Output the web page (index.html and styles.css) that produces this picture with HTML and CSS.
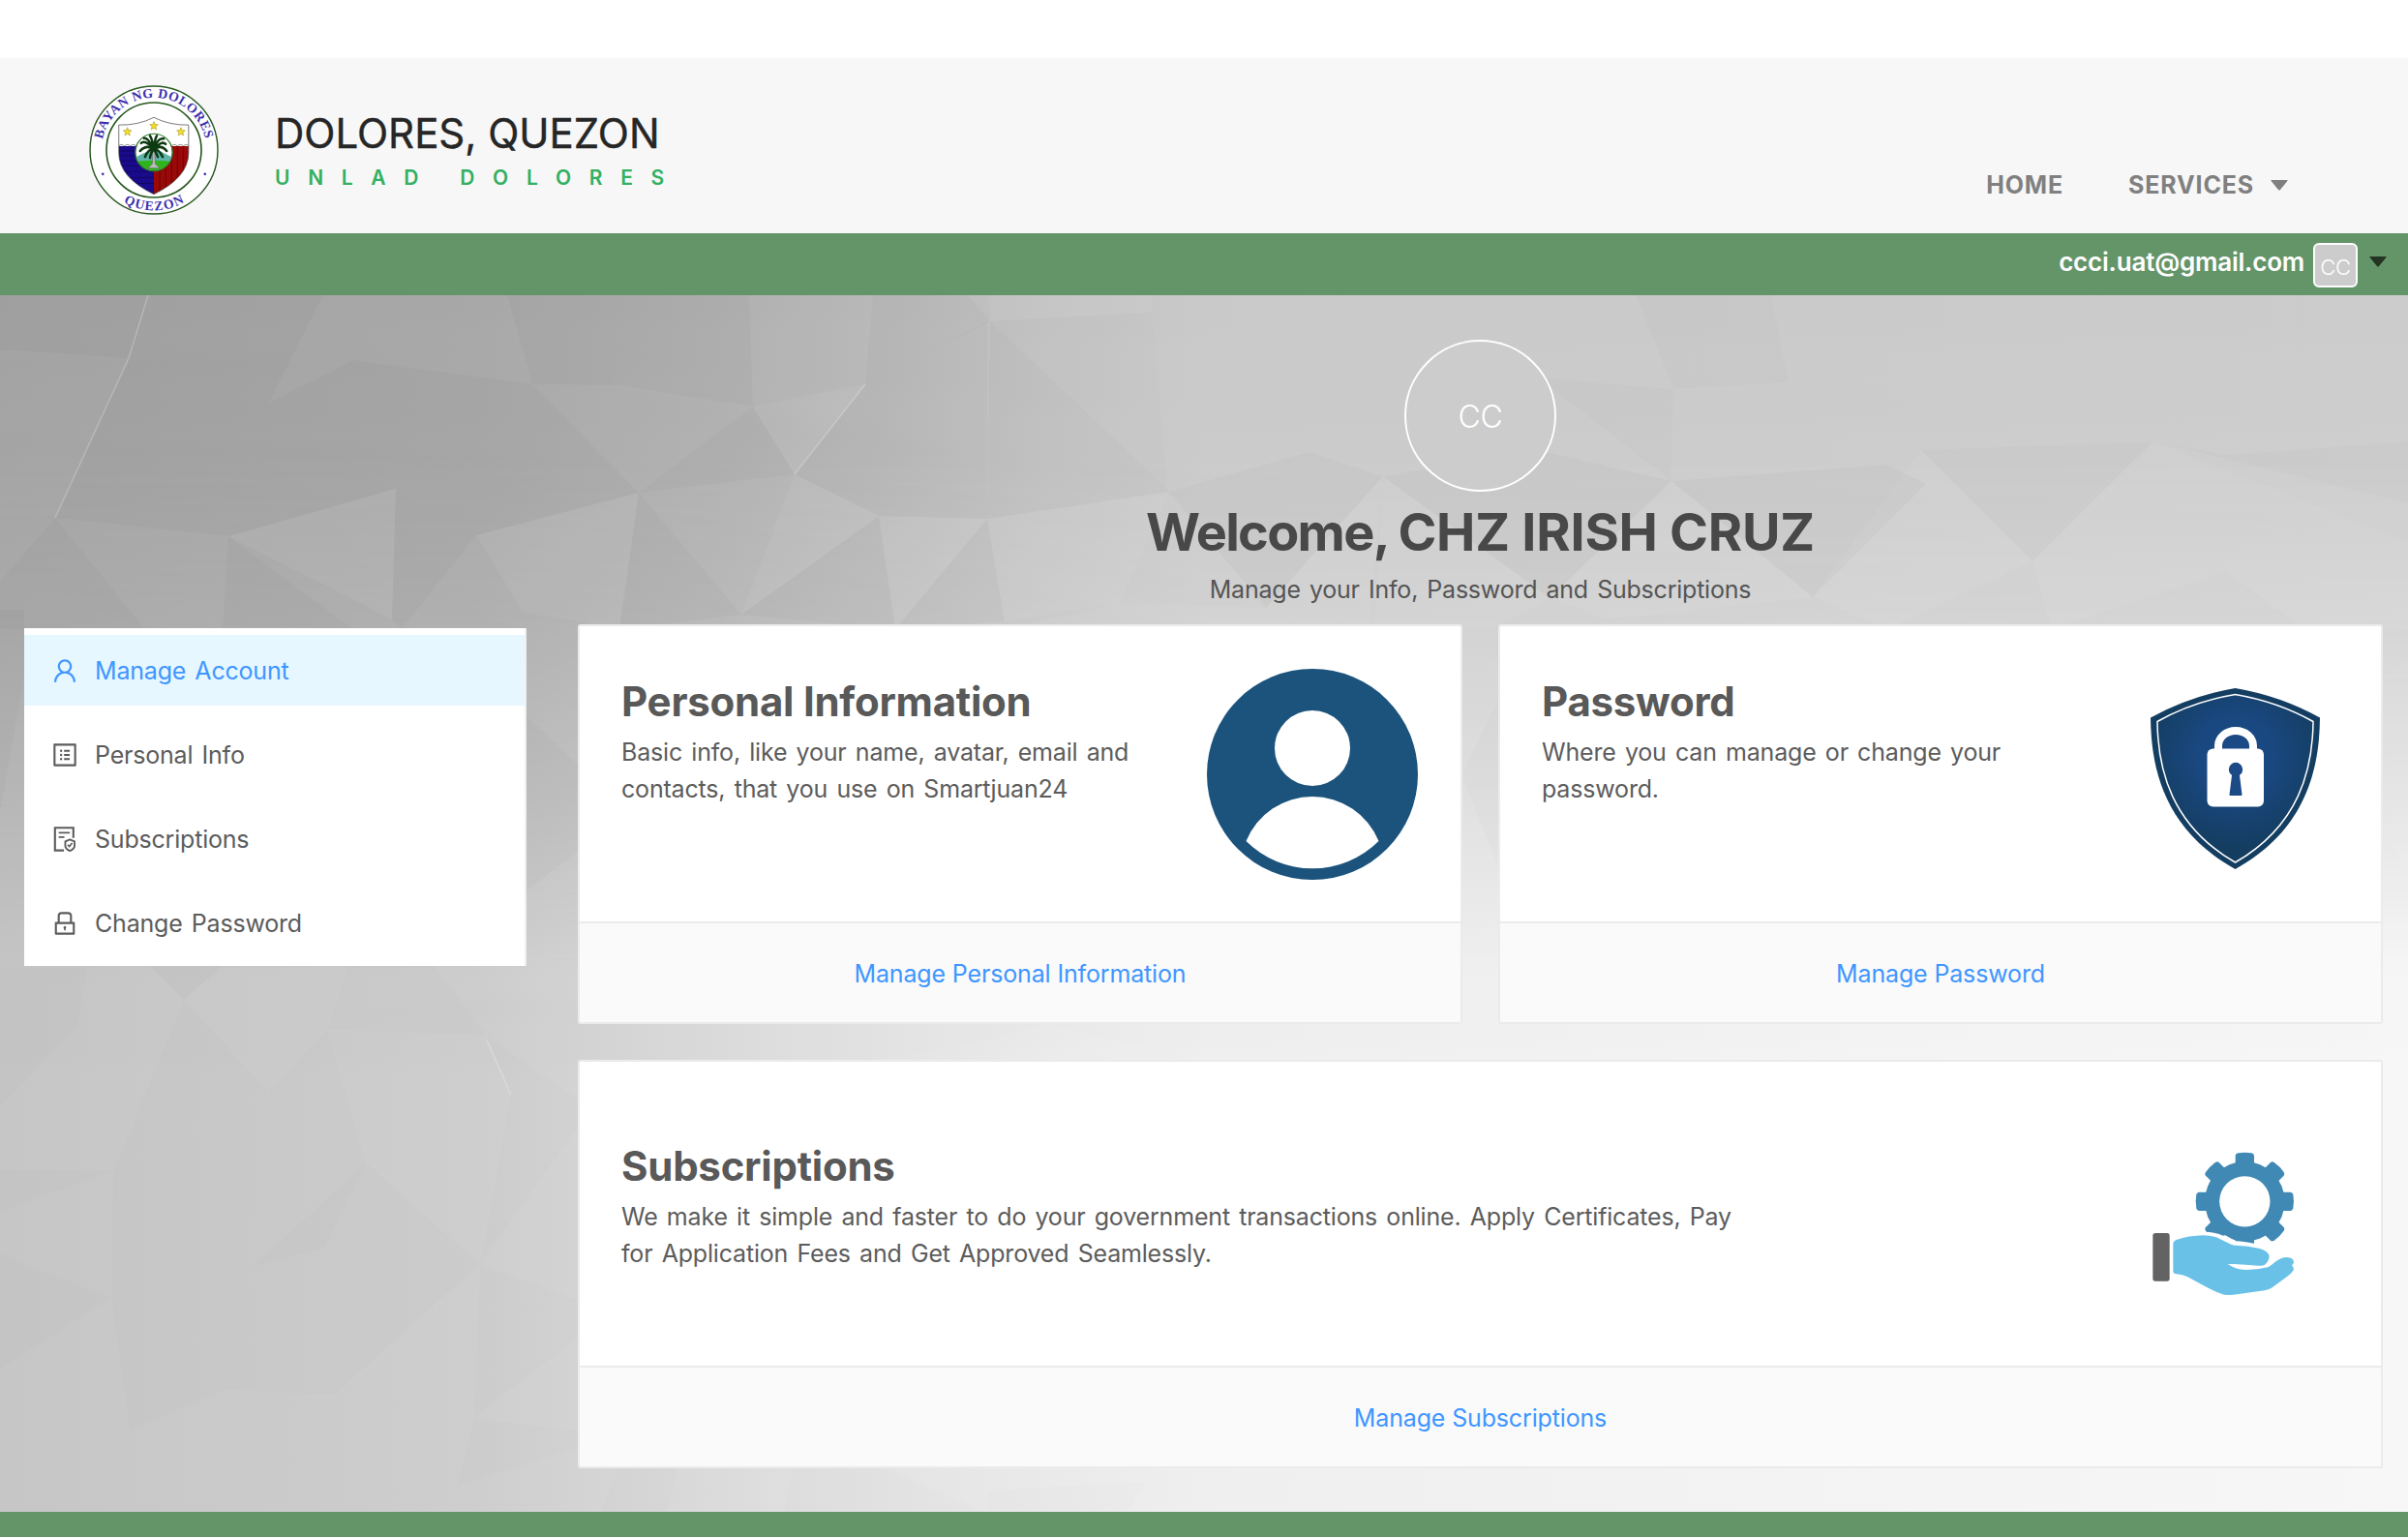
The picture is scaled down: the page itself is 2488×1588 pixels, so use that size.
FILE: index.html
```html
<!DOCTYPE html>
<html lang="en">
<head>
<meta charset="utf-8">
<title>Dolores, Quezon – Manage Account</title>
<link rel="stylesheet" href="styles.css">
</head>
<body>
<header class="header">
  <div class="brand">
    <svg class="seal" viewBox="0 0 132 132" width="134" height="134">
      <defs>
        <path id="arc-top" d="M12.6 66a53.4 53.4 0 0 1 106.8 0"/>
        <path id="arc-bottom" d="M4.5 66a61.5 61.5 0 0 0 123 0"/>
        <clipPath id="shield-clip"><path d="M30.3 40.5Q50 41 66 32.8Q82 41 101.300 40.500V69Q101 94 66 111Q30.500 94 30.300 69z"/></clipPath>
        <clipPath id="disc-clip"><circle cx="66" cy="68.500" r="18.500"/></clipPath>
      </defs>
      <circle cx="66" cy="66" r="65" fill="#fff" stroke="#285a20" stroke-width="1.400"/>
      <circle cx="66" cy="66" r="48.300" fill="#fff" stroke="#285a20" stroke-width="1.600"/>
      <g clip-path="url(#shield-clip)">
        <path fill="#fff" d="M28 30h76v36H28z"/>
        <path fill="#1a0a8c" d="M28 62h38v52H28z"/>
        <path fill="#9a0808" d="M66 62h38v52H66z"/>
        <path d="M30 62q3-3 6 0q3-3 6 0q3-3 6 0q3-3 6 0M78 62q3-3 6 0q3-3 6 0q3-3 6 0q3-3 6 0" fill="#fff" stroke="#222" stroke-width=".5"/>
        <path d="M30 67h36M30 72h36M30 77h36M30 82h36M30 88h36M30 94h36M30 100h36M72 62v50M78 62v50M84 62v50M90 62v50M96 62v50" stroke="#000" stroke-opacity=".45" stroke-width=".7"/>
      </g>
      <path d="M30.300 40.500Q50 41 66 32.800Q82 41 101.300 40.500V69Q101 94 66 111Q30.500 94 30.300 69z" fill="none" stroke="#444" stroke-width=".7"/>
      <g clip-path="url(#disc-clip)">
        <circle cx="66" cy="68.500" r="19" fill="#fff"/>
        <path fill="#5fb5ac" d="M46 74l10-5 8-2 6-1 8 4 8 4v6H46z"/>
        <path fill="#2fb51c" d="M46 78q18-3 40 0v12H46z"/>
        <path fill="#bbb" stroke="#555" stroke-width=".5" d="M64.800 65h2l.6 15 4.500 4.500H60L64.400 80z"/>
      </g>
      <circle cx="66" cy="68.500" r="19" fill="none" stroke="#2d7a2a" stroke-width="1.200"/>
      <path fill="none" stroke="#0e3a12" stroke-width="2.500" stroke-linecap="round" d="M66 65Q58 60 52 67M66 65Q57 55 53 59M66 65Q60 53 56 54M66 65Q64 54 62 51.500M66 65Q67 54 69 51.500M66 65Q70 53 76 54.500M66 65Q74 56 78 60M66 65Q74 60 79 67M66 65Q60 65 57 73M66 65Q71 65 75 73M66 65Q63 68 62 74M66 65Q68 68 70 73"/>
      <g fill="#f0de28" stroke="#a08a10" stroke-width=".5">
        <path id="star" d="M66 37l1.200 2.900 3.100.2-2.400 2 .8 3.100L66 43.500l-2.700 1.700.8-3.100-2.400-2 3.100-.2z"/>
        <use href="#star" x="-27" y="6"/><use href="#star" x="27.500" y="6"/>
      </g>
      <g class="seal-text">
        <text><textPath href="#arc-top" startOffset="11" textLength="145">BAYAN NG DOLORES</textPath></text>
        <text><textPath href="#arc-bottom" startOffset="64" textLength="65">QUEZON</textPath></text>
      </g>
      <circle cx="14" cy="90.500" r="1.300" fill="#3b2fae"/><circle cx="118" cy="90.500" r="1.300" fill="#3b2fae"/>
    </svg>
    <div class="brand-text">
      <div class="brand-name">DOLORES, QUEZON</div>
      <div class="brand-motto">UNLAD DOLORES</div>
    </div>
  </div>
  <nav class="nav">
    <a>HOME</a>
    <a>SERVICES</a>
    <svg class="nav-caret" width="18" height="11" viewBox="0 0 18 11"><path d="M1 0h16q1 0 .4 1L9.800 10.200q-.8.800-1.600 0L.6 1Q0 0 1 0z" fill="currentColor"/></svg>
  </nav>
</header>
<div class="userbar">
  <span class="user-email">ccci.uat@gmail.com</span>
  <span class="user-avatar">CC</span>
  <svg class="user-caret" width="18" height="11" viewBox="0 0 18 11"><path d="M1 0h16q1 0 .4 1L9.800 10.200q-.8.800-1.600 0L.6 1Q0 0 1 0z" fill="currentColor"/></svg>
</div>
<main class="main">
  <svg class="mesh" viewBox="0 305 2488 1257" preserveAspectRatio="none">
    <defs>
      <linearGradient id="g-low"><stop offset="0" stop-color="#c6c6c6"/><stop offset=".2" stop-color="#cecece"/><stop offset=".26" stop-color="#d6d6d6"/><stop offset=".32" stop-color="#dedede"/><stop offset=".4" stop-color="#e7e7e7"/><stop offset=".5" stop-color="#efefef"/><stop offset="1" stop-color="#f7f7f7"/></linearGradient>
      <linearGradient id="g-top"><stop offset="0" stop-color="#a3a3a3"/><stop offset=".2" stop-color="#a8a8a8"/><stop offset=".3" stop-color="#b0b0b0"/><stop offset=".37" stop-color="#b9b9b9"/><stop offset=".43" stop-color="#c2c2c2"/><stop offset=".5" stop-color="#c9c9c9"/><stop offset="1" stop-color="#cccccc"/></linearGradient>
      <linearGradient id="g-fade" x2="0" y2="1"><stop offset="0" stop-color="#fff"/><stop offset=".13" stop-color="#f6f6f6"/><stop offset=".26" stop-color="#ccc"/><stop offset=".4" stop-color="#777"/><stop offset=".55" stop-color="#080808"/><stop offset=".65" stop-color="#000"/></linearGradient>
      <mask id="m-fade"><path d="M0 305h2488v1257H0z" fill="url(#g-fade)"/></mask>
    </defs>
    <path d="M0 305h2488v1257H0z" fill="url(#g-low)"/>
    <path d="M0 305h2488v1257H0z" fill="url(#g-top)" mask="url(#m-fade)"/>
    <g fill="#000" fill-opacity=".02">
      <path d="M0 305H153L133 370 17 362 0 362z"/>
      <path d="M153 305H334L278 416 133 370z"/>
      <path d="M133 370L278 416 236 554 57 535z"/>
      <path d="M278 416L409 505 236 554z"/>
      <path d="M524 305H625L640 398 550 397z"/>
      <path d="M550 397L660 509 492 553z"/>
      <path d="M550 397L492 553 409 505z"/>
      <path d="M550 397L409 505 278 416 365 372z"/>
      <path d="M774 305L778 420 640 398 625 305z"/>
      <path d="M778 420L821 490 660 509z"/>
      <path d="M894 397L908 533 821 490z"/>
      <path d="M894 397L1020 332V536L908 533z"/>
      <path d="M1023 332L1208 508 1020 536z"/>
      <path d="M902 305H1000L1023 332 894 397z"/>
      <path d="M1190 323L1207 508 1023 332z"/>
      <path d="M660 509L766 635 640 650z"/>
      <path d="M57 535L150 650H0V600z"/>
      <path d="M236 554L365 650H230z"/>
      <path d="M409 505L492 553 415 650 405 640z"/>
      <path d="M908 533L925 650 766 635z"/>
      <path d="M1020 536L1038 642 925 650z"/>
      <path d="M1353 467L1207 508 1308 628 1429 492z"/>
      <path d="M1429 492L1601 618 1727 497 1589 465z"/>
      <path d="M1727 497L1873 617 1990 500 1950 480z"/>
      <path d="M0 840L25 700V630H0z"/>
      <path d="M544 740L597 790V880L544 920z"/>
      <path d="M155 998H230L190 1033z"/>
    </g>
    <g fill="#000" fill-opacity=".01">
      <path d="M1589 390L1729 402 1727 497z"/>
      <path d="M1848 395L1729 402 1690 305H1830z"/>
      <path d="M1985 465L2225 456 2100 580z"/>
      <path d="M2225 456L2488 520V456L2300 470z"/>
      <path d="M1510 800L1549 720V900z"/>
    </g>
    <g fill="#fff" fill-opacity=".05">
      <path d="M492 553L660 509 640 650 540 632z"/>
      <path d="M821 490L908 533 766 635z"/>
      <path d="M1020 305H1190V323L1023 332z"/>
      <path d="M894 397L821 490 778 420z"/>
      <path d="M908 533L1020 536 925 650z"/>
      <path d="M1023 332L1190 323 1208 508z"/>
      <path d="M1208 508L1157 623 1038 642 1020 536z"/>
      <path d="M236 554L409 505 405 640z"/>
      <path d="M1157 623L1308 628 1345 650H1038z"/>
      <path d="M1308 628L1429 492 1415 645 1345 650z"/>
      <path d="M1429 492L1601 618 1540 650H1420z"/>
      <path d="M1601 618L1727 497 1873 617 1660 640z"/>
      <path d="M1985 465L2100 580 1950 650 1873 617z"/>
      <path d="M2225 456L2300 590 2120 650 2100 580z"/>
      <path d="M2225 456L2488 560V650H2380L2300 590z"/>
      <path d="M2461 700L2488 680V900L2461 860z"/>
      <path d="M1080 1058L1240 1095H900L1000 1080z"/>
    </g>
    <g fill="#000" fill-opacity=".007">
      <path d="M0 1000L90 1000 80 1060 0 1145z"/>
      <path d="M190 1033L277 1127 117 1210z"/>
      <path d="M0 1208L117 1210 0 1252z"/>
      <path d="M0 1295L115 1341 0 1415z"/>
      <path d="M117 1210L277 1127 259 1310 233 1436 134 1478 115 1341z"/>
      <path d="M338 1064L378 1201 335 1290 259 1310 277 1127z"/>
      <path d="M503 1070L597 1135V1165L496 1306 528 1131z"/>
      <path d="M338 1064L503 1070 450 998H360z"/>
      <path d="M496 1306L597 1343V1382L490 1465z"/>
      <path d="M490 1465L597 1478V1496L472 1536z"/>
      <path d="M259 1310L378 1201 496 1306 346 1441 233 1436z"/>
      <path d="M640 1516L700 1516 690 1562H620z"/>
      <path d="M820 1516H910L1020 1562H810z"/>
      <path d="M1185 1530L1165 1562H1020V1540z"/>
    </g>
    <g fill="none" stroke="#fff" stroke-opacity=".22" stroke-width="1.500">
      <path d="M153 305L133 370 57 535"/>
      <path d="M894 397L821 490"/>
      <path d="M503 1075L528 1131"/>
    </g>
  </svg>
  <aside class="sidebar">
    <ul class="menu">
      <li class="menu-item menu-item-active">
        <svg class="menu-icon" viewBox="0 0 1024 1024"><path d="M858.500 763.600a374 374 0 00-80.600-119.500 375.630 375.630 0 00-119.500-80.600c-.4-.2-.8-.3-1.200-.5C719.500 518 760 444.700 760 362c0-137-111-248-248-248S264 225 264 362c0 82.700 40.500 156 102.800 201.100-.4.200-.8.300-1.200.5-44.800 18.900-85 46-119.500 80.600a375.630 375.630 0 00-80.600 119.500A371.700 371.700 0 00136 901.800a8 8 0 008 8.200h60c4.400 0 7.900-3.500 8-7.800 2-77.200 33-149.500 87.800-204.300 56.700-56.700 132-87.900 212.200-87.900s155.500 31.200 212.200 87.900C779 752.700 810 825 812 902.200c.1 4.400 3.600 7.800 8 7.800h60a8 8 0 008-8.200c-1-47.800-10.900-94.300-29.500-138.200zM512 534c-45.900 0-89.100-17.900-121.600-50.400S340 407.900 340 362c0-45.900 17.900-89.100 50.400-121.600S466.100 190 512 190s89.100 17.900 121.600 50.400S684 316.100 684 362c0 45.900-17.900 89.100-50.400 121.600S557.900 534 512 534z"/></svg>
        <span>Manage Account</span>
      </li>
      <li class="menu-item">
        <svg class="menu-icon" viewBox="0 0 1024 1024"><path d="M880 112H144c-17.700 0-32 14.300-32 32v736c0 17.700 14.300 32 32 32h736c17.700 0 32-14.300 32-32V144c0-17.700-14.300-32-32-32zm-40 728H184V184h656v656zM492 400h184c4.400 0 8-3.600 8-8v-48c0-4.400-3.600-8-8-8H492c-4.400 0-8 3.600-8 8v48c0 4.400 3.600 8 8 8zm0 144h184c4.400 0 8-3.600 8-8v-48c0-4.400-3.600-8-8-8H492c-4.400 0-8 3.600-8 8v48c0 4.400 3.600 8 8 8zm0 144h184c4.400 0 8-3.600 8-8v-48c0-4.400-3.600-8-8-8H492c-4.400 0-8 3.600-8 8v48c0 4.400 3.600 8 8 8zM340 368a40 40 0 1080 0 40 40 0 10-80 0zm0 144a40 40 0 1080 0 40 40 0 10-80 0zm0 144a40 40 0 1080 0 40 40 0 10-80 0z"/></svg>
        <span>Personal Info</span>
      </li>
      <li class="menu-item">
        <svg class="menu-icon" viewBox="0 0 1024 1024"><path fill="none" stroke="currentColor" stroke-width="72" d="M480 908H164V112H812V470"/><path fill="none" stroke="currentColor" stroke-width="62" d="M296 285H688M296 440H496"/><path fill="none" stroke="currentColor" stroke-width="64" stroke-linejoin="round" d="M688 528L854 590V748Q854 842 688 926Q528 842 528 748V590z"/><path fill="none" stroke="currentColor" stroke-width="56" d="M614 712L672 772L770 652"/></svg>
        <span>Subscriptions</span>
      </li>
      <li class="menu-item">
        <svg class="menu-icon" viewBox="0 0 1024 1024"><path d="M832 464h-68V240c0-70.700-57.300-128-128-128H388c-70.700 0-128 57.300-128 128v224h-68c-17.700 0-32 14.300-32 32v384c0 17.700 14.300 32 32 32h640c17.700 0 32-14.300 32-32V496c0-17.700-14.300-32-32-32zM332 240c0-30.900 25.100-56 56-56h248c30.900 0 56 25.100 56 56v224H332V240zm460 600H232V536h560v304zM484 701v53c0 4.400 3.600 8 8 8h40c4.400 0 8-3.600 8-8v-53a48.010 48.010 0 10-56 0z"/></svg>
        <span>Change Password</span>
      </li>
    </ul>
  </aside>
  <section class="content">
    <div class="profile-avatar">CC</div>
    <h1 class="welcome"><span class="greeting">Welcome, </span>CHZ IRISH CRUZ</h1>
    <p class="welcome-sub">Manage your Info, Password and Subscriptions</p>
    <div class="cards">
      <article class="card">
        <div class="card-body">
          <div class="card-text">
            <h2>Personal Information</h2>
            <p>Basic info, like your name, avatar, email and contacts, that you use on Smartjuan24</p>
          </div>
          <svg class="art-person" width="218" height="218" viewBox="-109 -109 218 218">
            <circle r="109" fill="#1c537c"/>
            <circle cy="-27" r="39" fill="#fff"/>
            <path d="M-68.500 69A74 74 0 0 1 68.500 69A97 97 0 0 1-68.500 69z" fill="#fff"/>
          </svg>
        </div>
        <div class="card-footer"><a>Manage Personal Information</a></div>
      </article>
      <article class="card">
        <div class="card-body">
          <div class="card-text card-text-narrow">
            <h2>Password</h2>
            <p>Where you can manage or change your password.</p>
          </div>
          <svg class="art-shield" width="175" height="187" viewBox="-87.500 0 175 187">
            <defs><radialGradient id="g-shield" gradientUnits="userSpaceOnUse" cx="0" cy="70" r="95"><stop offset="0" stop-color="#1b4b8a"/><stop offset=".45" stop-color="#19477e"/><stop offset="1" stop-color="#143d60"/></radialGradient></defs>
            <path d="M0 0Q47 8 87.500 30.500C87 82 74 146 0 187C-74 146-87 82-87.500 30.500Q-47 8 0 0z" fill="#143e61"/>
            <path d="M0 6.500Q44 14 80.500 34.500C80 84 66 142 0 180C-66 142-80 84-80.500 34.500Q-44 14 0 6.500z" fill="url(#g-shield)" stroke="#fff" stroke-width="1.500"/>
            <path d="M-18 64V58a18 15.500 0 0 1 36 0V64" fill="none" stroke="#fff" stroke-width="8" transform="translate(.5 1.500)"/>
            <rect x="-29" y="62.500" width="58.500" height="60" rx="6" fill="#fff"/>
            <circle cx=".5" cy="84" r="7.200" fill="#1b4a86"/>
            <path d="M-3 86H4L7 110q0 1-1 1H-5q-1 0-1-1z" fill="#1b4a86"/>
          </svg>
        </div>
        <div class="card-footer"><a>Manage Password</a></div>
      </article>
      <article class="card card-wide">
        <div class="card-body">
          <div class="card-text card-text-wide">
            <h2>Subscriptions</h2>
            <p>We make it simple and faster to do your government transactions online. Apply Certificates, Pay for Application Fees and Get Approved Seamlessly.</p>
          </div>
          <svg class="art-hand" width="148" height="150" viewBox="130 120 444 450">
            <rect x="134" y="372" width="52" height="149" rx="8" fill="#636363"/>
            <g fill="#4189b5">
              <path id="tooth" d="M390 170V132q0-6 8-8q22-4 42 0q8 2 8 8V170z"/>
              <use href="#tooth" transform="rotate(45 419 274)"/>
              <use href="#tooth" transform="rotate(90 419 274)"/>
              <use href="#tooth" transform="rotate(135 419 274)"/>
              <use href="#tooth" transform="rotate(180 419 274)"/>
              <use href="#tooth" transform="rotate(225 419 274)"/>
              <use href="#tooth" transform="rotate(270 419 274)"/>
              <use href="#tooth" transform="rotate(315 419 274)"/>
              <circle cx="419" cy="274" r="124"/>
            </g>
            <circle cx="419" cy="274" r="78.500" fill="#fff"/>
            <path d="M290 368Q330 369 352 380L359 379 390 397Q420 398 460 407L500 425V450H290z" fill="#fff"/>
            <path d="M197 405q0-8 10-12Q245 380 290 379Q322 379 346 392L377 407Q384 410 392 410Q430 411 465 420Q494 428 495 445Q494 460 481 470Q476 474 462 473Q420 470 385 468Q370 467 365 470Q372 470 382 477Q400 486 425 486Q460 486 490 478Q500 474 515 460Q535 446 550 447Q571 448 571 464Q565 471 566 474Q572 478 570 487Q566 495 553 505L505 540Q495 548 480 550L400 561Q360 568 347 560Q330 555 300 539L242 508Q227 500 207 499Q197 498 197 490z" fill="#6ac1e8"/>
          </svg>
        </div>
        <div class="card-footer"><a>Manage Subscriptions</a></div>
      </article>
    </div>
  </section>
</main>
<footer class="footer"></footer>
</body>
</html>
```
FILE: styles.css
```css
* { box-sizing: border-box; }
body {
  margin: 0;
  padding-top: 60px;
  height: 1588px;
  overflow: hidden;
  background: #fff;
  font: 400 25px/40px Inter, "Liberation Sans", sans-serif;
  letter-spacing: -0.2px;
  word-spacing: 2.4px;
  color: #5c5c5c;
}
h1, h2, p, ul { margin: 0; padding: 0; }
.header {
  height: 181px;
  background: #f7f7f7;
  display: flex;
  justify-content: space-between;
  padding: 28px 124px 0 92px;
}
.brand { display: flex; gap: 58px; }
.brand-text { padding-top: 25px; }
.brand-name { font-size: 42px; line-height: 50px; letter-spacing: 0; word-spacing: 0; color: #262626; -webkit-text-stroke: 0.4px #262626; }
.brand-motto { margin-top: 8px; font-size: 21px; line-height: 26px; font-weight: 600; letter-spacing: 18.7px; word-spacing: 0; color: #33b062; }
.seal-text { font: 700 13.500px "Liberation Serif", serif; fill: #3b2fae; letter-spacing: 0; word-spacing: 0; }
.nav { display: flex; align-items: center; height: 32px; margin-top: 87px; font-weight: 700; letter-spacing: 0.85px; color: #808080; }
.nav a + a { margin-left: 67px; }
.nav-caret { margin-left: 17px; }
.userbar {
  height: 64px;
  background: #649569;
  display: flex;
  justify-content: flex-end;
  align-items: flex-start;
  padding: 10px 22px 0 0;
}
.user-email { font-size: 26px; font-weight: 600; color: #fff; letter-spacing: -0.2px; }
.user-avatar {
  margin-left: 9px;
  width: 46px;
  height: 46px;
  border: 2px solid #fff;
  border-radius: 6px;
  background: #ccc;
  color: #fff;
  font-size: 22px;
  font-weight: 300;
  line-height: 47px;
  text-align: center;
}
.user-caret { margin: 14px 0 0 12px; color: #233423; }
.main {
  position: relative;
  height: 1257px;
  padding: 0 26px 0 25px;
  display: grid;
  grid-template-columns: 519px 1fr;
  gap: 53px;
}
.mesh { position: absolute; inset: 0; width: 100%; height: 100%; }
.sidebar, .content { position: relative; }
.sidebar { padding-top: 344px; }
.menu {
  height: 349px;
  padding-top: 7px;
  background: #fff;
  border-right: 2px solid #f0f0f0;
  list-style: none;
  display: flex;
  flex-direction: column;
  gap: 14.300px;
}
.menu-item { height: 73px; padding-left: 27px; display: flex; align-items: center; gap: 16px; }
.menu-item-active { background: #e6f7ff; color: #4096ff; }
.menu-icon { width: 30px; height: 30px; fill: currentColor; }
.content { display: flex; flex-direction: column; align-items: center; padding-top: 46px; }
.profile-avatar {
  width: 157px;
  height: 157px;
  border: 2px solid #fff;
  border-radius: 50%;
  background: #ccc;
  color: #fff;
  font-size: 32px;
  font-weight: 300;
  line-height: 156px;
  text-align: center;
}
.welcome { margin-top: 9px; font-size: 54px; line-height: 66px; font-weight: 700; letter-spacing: -0.25px; word-spacing: 0; color: #484848; }
.greeting { letter-spacing: -1.7px; }
.welcome-sub { margin-top: 6px; color: #555; letter-spacing: -0.22px; }
.cards { margin-top: 16px; width: 100%; display: grid; grid-template-columns: 1fr 1fr; gap: 37px; }
.card { height: 413px; display: flex; flex-direction: column; background: #fff; border: 2px solid #ebebeb; border-radius: 3px; }
.card-wide { grid-column: 1 / -1; height: 422px; }
.card-body { flex: 1; display: flex; justify-content: space-between; align-items: flex-start; padding: 0 43px 0 43px; }
.card-text { width: 545px; padding-top: 53px; }
.card-text-narrow { width: 500px; }
.card-text-wide { width: 1180px; padding-top: 83px; }
.card-text h2 { font-size: 42px; line-height: 50px; font-weight: 700; letter-spacing: -0.25px; word-spacing: 0; color: #595959; }
.card-text p { margin-top: 7.500px; line-height: 38.300px; letter-spacing: -0.18px; }
.card-footer {
  height: 104px;
  padding-top: 1px;
  border-top: 2px solid #ebebeb;
  background: #fafafa;
  display: flex;
  justify-content: center;
  align-items: center;
  color: #4096ff;
  letter-spacing: -0.15px;
  word-spacing: 0;
}
.art-person { margin: 44px 1px 0 0; }
.art-shield { margin: 64px 20px 0 0; }
.art-hand { margin: 93px 46px 0 0; }
.footer { height: 26px; background: #649569; }
```
